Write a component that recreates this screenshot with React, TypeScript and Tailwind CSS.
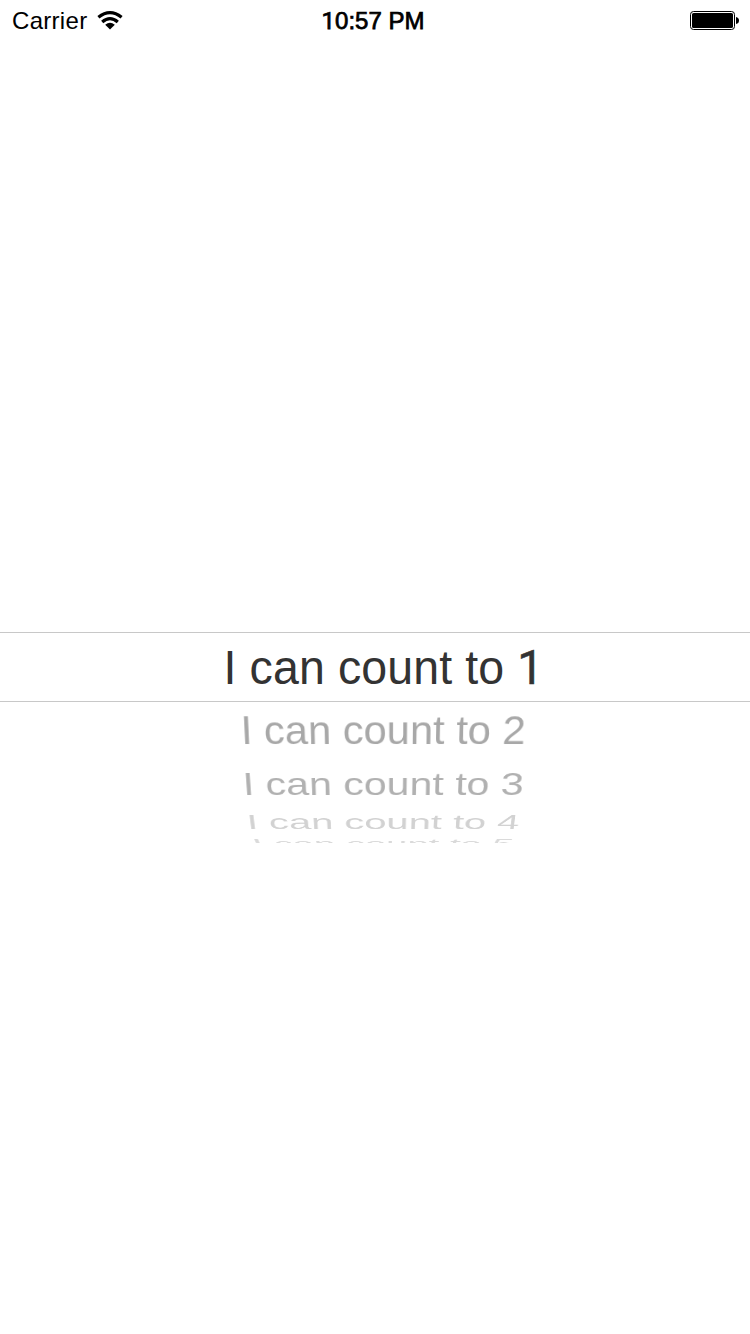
import React from "react";

const FONT_SIZE = 46.5;
const BASELINE = FONT_SIZE * 0.8465;

type WheelRow = {
  digit: string;
  color: string;
  height: number;
  baseline: number;
  shift: number;
  scaleX: number;
  scaleY: number;
  tilt: number;
};

const rows: WheelRow[] = [
  { digit: "2", color: "#a8a8a8", height: 58, baseline: 42.4, shift: 8.3, scaleX: 0.892, scaleY: 0.86, tilt: 0.0003 },
  { digit: "3", color: "#b1b1b1", height: 46, baseline: 35.3, shift: 8.3, scaleX: 0.879, scaleY: 0.68, tilt: 0.00035 },
  { digit: "4", color: "#d2d2d2", height: 32, baseline: 23.2, shift: 8.2, scaleX: 0.852, scaleY: 0.43, tilt: 0.00042 },
  { digit: "5", color: "#dadada", height: 5, baseline: 10.2, shift: 8, scaleX: 0.805, scaleY: 0.27, tilt: 0.001 },
];

function project(row: WheelRow) {
  const { scaleX, scaleY, tilt, shift, baseline } = row;
  return (
    `translate(${shift}px, ${baseline - BASELINE}px) ` +
    `matrix3d(${scaleX},0,0,0, 0,${scaleY},0,${tilt}, 0,0,1,0, 0,0,0,1)`
  );
}

function WifiIcon() {
  return (
    <svg className="ml-[10px] h-[19px] w-[26px]" viewBox="0 0 26 19" fill="none">
      <path d="M1.4 6.3Q13 -3 24.6 6.3" stroke="#000" strokeWidth="3.2" />
      <path d="M5.2 10.9Q13 4.3 20.8 10.9" stroke="#000" strokeWidth="3.3" />
      <path d="M8.2 13.8Q13 9.9 17.8 13.8L13 18.4Z" fill="#000" />
    </svg>
  );
}

function BatteryIcon() {
  return (
    <svg className="h-[19px] w-[50px]" viewBox="0 0 50 19">
      <rect x="0.5" y="0.5" width="44" height="18" rx="3" fill="#fff" stroke="#000" />
      <rect x="2" y="2" width="41" height="15" rx="1.6" fill="#000" />
      <path d="M46 6Q49 6.5 49 9.5Q49 12.5 46 13Z" fill="#000" />
    </svg>
  );
}

function StatusBar() {
  return (
    <header className="grid h-10 grid-cols-3 items-center text-[24px] leading-none text-black">
      <div className="flex items-center pl-[12px]">
        <span className="pt-[2px] tracking-[0.3px]">Carrier</span>
        <WifiIcon />
      </div>
      <div className="whitespace-nowrap pr-[4px] pt-[2px] text-center [-webkit-text-stroke:0.75px_#000]">
        <span className="font-[Roboto,sans-serif]">1</span>0:57 PM
      </div>
      <div className="flex justify-end pr-[10px] pt-[1px]">
        <BatteryIcon />
      </div>
    </header>
  );
}

export default function App() {
  return (
    <main className="flex h-[1334px] w-[750px] flex-col overflow-hidden bg-white font-['Liberation_Sans',Arial,sans-serif]">
      <StatusBar />
      <section className="mt-[592px]">
        <div className="flex h-[70px] justify-center border-y border-[#c8c8c8] pl-[17px] pt-[12px] text-[46.5px] leading-none text-[#333]">
          <span className="h-[46.5px] origin-[50%_85%] scale-y-[1.04] whitespace-nowrap tracking-[0.1px]">
            I can count to{" "}
            <span className="font-[Roboto,sans-serif] [-webkit-text-stroke:0.5px_#333]">1</span>
          </span>
        </div>
        <div className="h-[141px] overflow-hidden">
          {rows.map((row) => (
            <div key={row.digit} className="flex justify-center" style={{ height: row.height }}>
              <span
                className="h-[46.5px] whitespace-nowrap text-[46.5px] leading-none"
                style={{
                  color: row.color,
                  transform: project(row),
                  transformOrigin: `50% ${BASELINE}px`,
                }}
              >
                I can count to {row.digit}
              </span>
            </div>
          ))}
        </div>
      </section>
    </main>
  );
}
